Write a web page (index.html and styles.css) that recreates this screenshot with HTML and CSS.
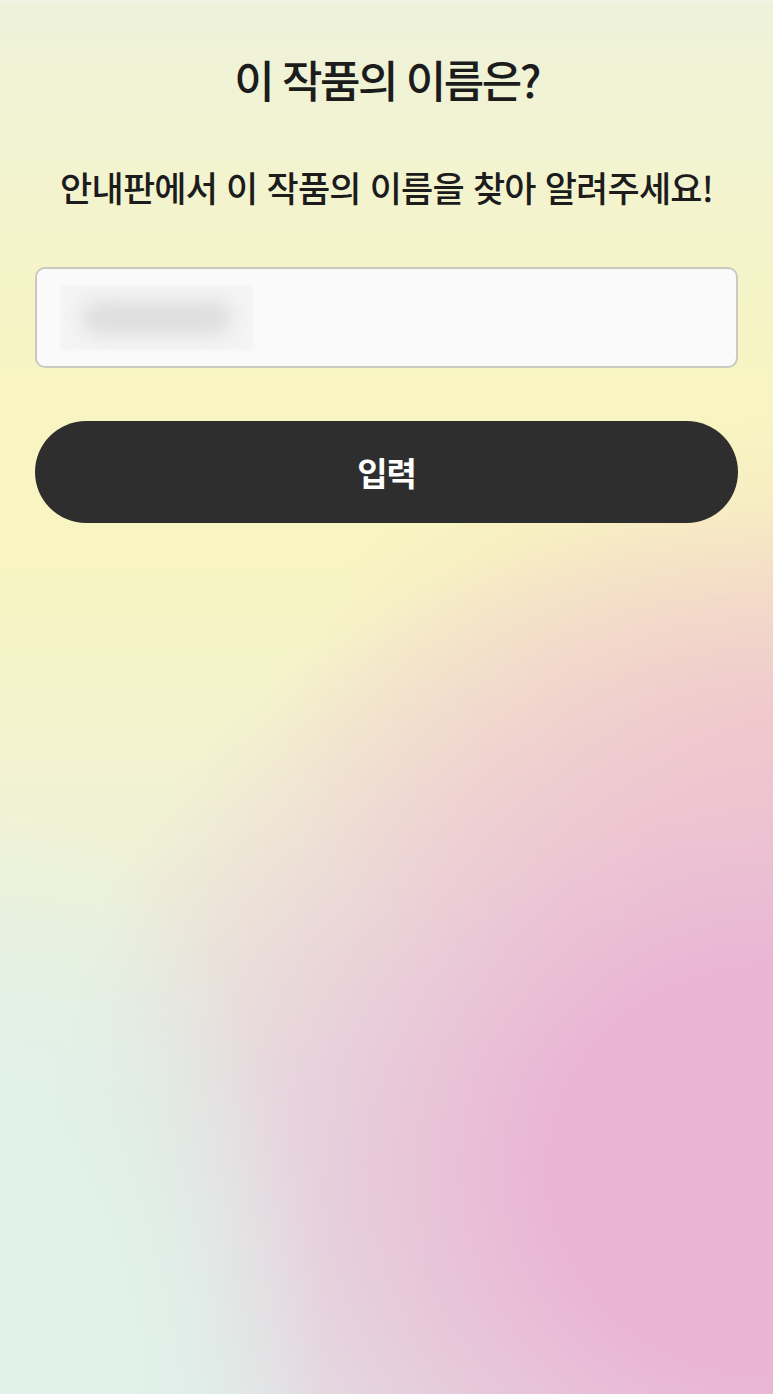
FILE: index.html
```html
<!DOCTYPE html>
<html lang="ko">
<head>
<meta charset="utf-8">
<title>이 작품의 이름은?</title>
<link rel="stylesheet" href="styles.css">
</head>
<body>
<main class="page">
  <h1 class="title">이 작품의 이름은?</h1>
  <p class="subtitle">안내판에서 이 작품의 이름을 찾아 알려주세요!</p>
  <div class="field">
    <span class="blurred"><span class="blob"></span></span>
  </div>
  <button class="submit" type="button">입력</button>
</main>
</body>
</html>
```

FILE: styles.css
```css
html, body {
  margin: 0;
  padding: 0;
}
body {
  min-height: 1394px;
  font-family: "Noto Sans CJK KR", "Noto Sans", sans-serif;
  color: #1c1c1c;
  background-color: #f3f2d6;
  background-image:
    radial-gradient(ellipse 42% 42% at 0% 100%, rgba(224,242,234,1) 40%, rgba(224,242,234,0) 100%),
    radial-gradient(ellipse 95% 48% at 100% 84%, rgba(234,181,212,1) 30%, rgba(234,181,212,0) 100%),
    radial-gradient(ellipse 65% 22% at 100% 52%, rgba(245,214,198,0.9) 0%, rgba(245,214,198,0) 100%),
    linear-gradient(180deg, #eef2da 0%, #f8f5c2 28%, #f8f5c2 40%, #f1f2d4 58%, #e4f0e4 78%, #e0f2ea 100%);
  border-top: 2px solid #f1f3e4;
  box-sizing: border-box;
}
.page {
  display: flex;
  flex-direction: column;
  padding: 0 35px;
}
.title {
  margin: 49px 0 0;
  text-align: center;
  font-size: 44px;
  font-weight: 500;
  line-height: 56px;
  letter-spacing: -2.5px;
}
.subtitle {
  margin: 57px 0 0;
  text-align: center;
  font-size: 35px;
  font-weight: 500;
  line-height: 46px;
  letter-spacing: -0.8px;
}
.field {
  margin-top: 57px;
  height: 97px;
  border: 2px solid #c9c9c2;
  border-radius: 10px;
  background: #fafafa;
  display: flex;
  align-items: center;
  padding-left: 24px;
}
.blurred {
  width: 192px;
  height: 64px;
  background: #f4f4f4;
  display: flex;
  align-items: center;
  justify-content: center;
  filter: blur(1px);
}
.blob {
  width: 150px;
  height: 34px;
  background: #dedede;
  border-radius: 17px;
  filter: blur(9px);
}
.submit {
  margin-top: 53px;
  height: 102px;
  border: none;
  border-radius: 51px;
  background: #2e2e2e;
  color: #ffffff;
  font-family: "Noto Sans CJK KR", "Noto Sans", sans-serif;
  font-size: 33px;
  font-weight: 700;
  letter-spacing: -1px;
}
```
